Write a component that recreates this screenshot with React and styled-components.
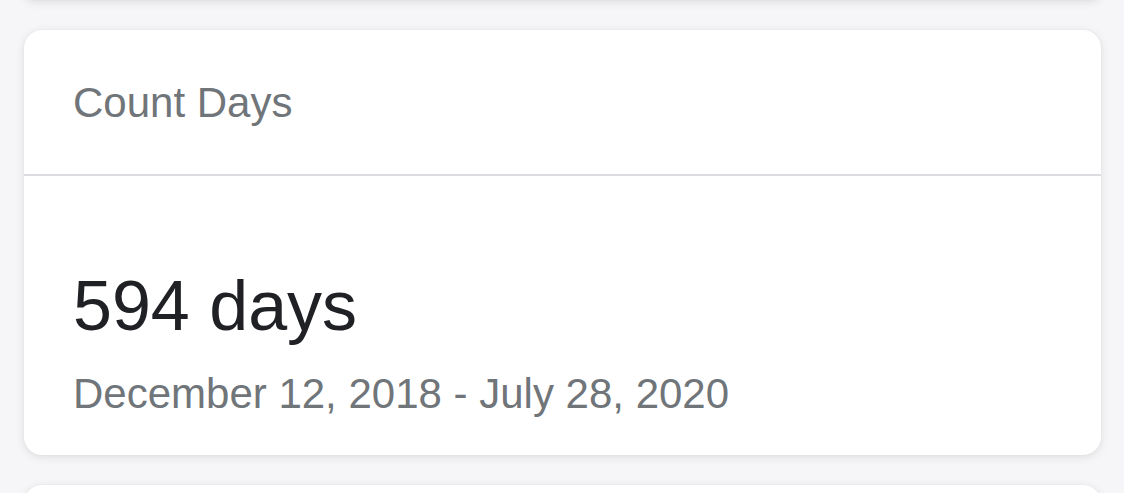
import React from 'react'
import styled, { createGlobalStyle } from 'styled-components'

const Global = createGlobalStyle`
  html, body {
    margin: 0;
    padding: 0;
    background: #f6f6f8;
    font-family: "Liberation Sans", Arial, sans-serif;
    overflow: hidden;
  }
`

const Page = styled.main`
  display: flex;
  flex-direction: column;
  gap: 30px;
  padding: 0 23px 0 24px;
  height: 493px;
  box-sizing: border-box;
  overflow: hidden;
`

const Card = styled.section`
  background: #fff;
  border-radius: 18px;
  box-shadow: 0 2px 10px rgba(0, 0, 0, 0.1), 0 0 2px rgba(0, 0, 0, 0.06);
  flex-shrink: 0;
  height: ${({ $height }) => ($height != null ? `${$height}px` : 'auto')};
  margin-top: ${({ $offset }) => ($offset ? `${$offset}px` : '0')};
`

const Header = styled.header`
  padding: 52px 49px 50px;
  border-bottom: 2px solid #dcdce0;
  font-size: 42px;
  line-height: 1;
  color: #70757a;
`

const Body = styled.div`
  padding: 95px 49px 40px;
  display: flex;
  flex-direction: column;
  gap: 32px;
`

const Total = styled.div`
  font-size: 70px;
  line-height: 1;
  color: #202124;
`

const Range = styled.div`
  font-size: 42px;
  line-height: 1;
  color: #70757a;
`

const App = () => {
  return (
    <>
      <Global />
      <Page>
        <Card $height={20} $offset={-20} />
        <Card>
          <Header>Count Days</Header>
          <Body>
            <Total>594 days</Total>
            <Range>December 12, 2018 - July 28, 2020</Range>
          </Body>
        </Card>
        <Card $height={40} />
      </Page>
    </>
  )
}

export default App
